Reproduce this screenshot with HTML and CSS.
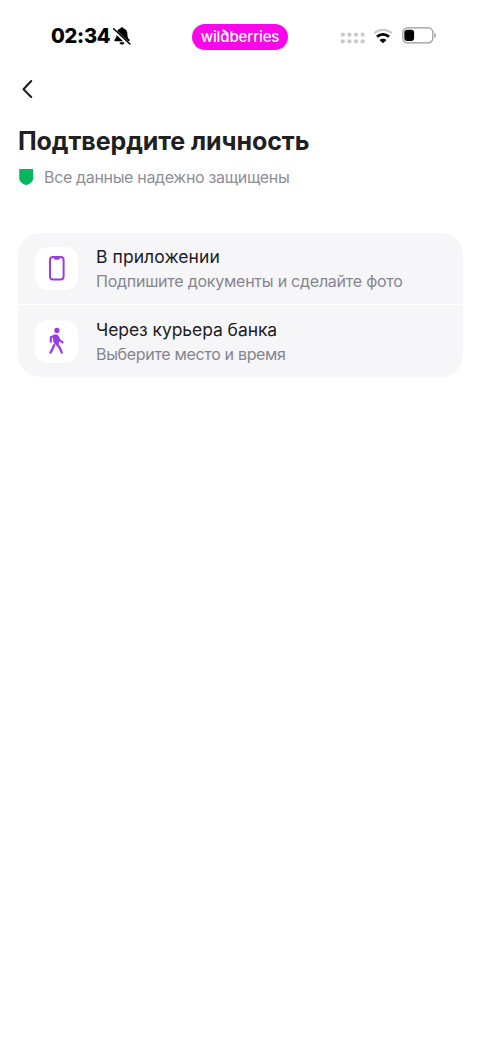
FILE: index.html
```html
<!DOCTYPE html>
<html lang="ru">
<head>
<meta charset="utf-8">
<meta name="viewport" content="width=device-width, initial-scale=1">
<title>Подтвердите личность</title>
<link rel="stylesheet" href="styles.css">
</head>
<body>
<header class="status">
  <div class="clock"><span class="time">02:34</span>
    <svg class="bell" width="20" height="20" viewBox="0 0 20 20"><path d="M10 1.2c-.9 0-1.500.6-1.600 1.400C5.800 3.200 4.600 5.400 4.600 8c0 3.200-.7 4.400-2 5.600-.6.6-.4 1.700.6 1.700h13.600c1 0 1.200-1.100.6-1.700-1.300-1.200-2-2.400-2-5.600 0-2.600-1.200-4.800-3.800-5.400C11.500 1.800 10.900 1.200 10 1.200zM7.500 16.300h5c-.2 1.500-1.200 2.300-2.500 2.300s-2.300-.8-2.500-2.300z" fill="#000"/><path d="M1 3.200 17.600 19" stroke="#fff" stroke-width="3.600"/><path d="M1.600 2.700 18 18" stroke="#000" stroke-width="1.500" stroke-linecap="round"/></svg>
  </div>
  <div class="brand"><span class="brand-text">wil<span class="brand-d">d</span>berries</span></div>
  <div class="system">
    <svg class="signal" width="26" height="13" viewBox="0 0 26 13" fill="#c9c9cb"><circle cx="2.800" cy="2.700" r="2.100"/><circle cx="9.400" cy="2.700" r="2.100"/><circle cx="16" cy="2.700" r="2.100"/><circle cx="22.600" cy="2.700" r="2.100"/><circle cx="2.800" cy="9.300" r="2.100"/><circle cx="9.400" cy="9.300" r="2.100"/><circle cx="16" cy="9.300" r="2.100"/><circle cx="22.600" cy="9.300" r="2.100"/></svg>
    <svg class="wifi" width="20" height="16" viewBox="0 0 20 16" fill="none" stroke-width="2.800"><path d="M1.200 5.300C6.200.7 13.800.7 18.800 5.300" stroke="#c9c9cb" stroke-width="2.200"/><path d="M4 8.700c3.400-3.100 8.600-3.100 12 0" stroke="#000"/><path d="M10 15.200 6.500 12c2-1.700 5-1.700 7 0z" fill="#000"/></svg>
    <svg class="battery" width="35" height="17" viewBox="0 0 35 17"><rect x=".8" y=".8" width="30" height="15" rx="4.600" fill="#fff" stroke="#98989b" stroke-width="1.200"/><rect x="2.300" y="2.700" width="9.800" height="11.200" rx="2.800" fill="#000"/><path d="M32.300 5.800c2.100.8 2.100 4.400 0 5.200z" fill="#98989b"/></svg>
  </div>
</header>
<nav class="nav">
  <svg width="14" height="20" viewBox="0 0 14 20"><path d="M11.200 2 3.500 10.300l7.700 7.700" fill="none" stroke="#1f1f22" stroke-width="2.100" stroke-linecap="round" stroke-linejoin="round"/></svg>
</nav>
<main class="content">
  <h1 class="title">Подтвердите личность</h1>
  <div class="secure">
    <svg width="16" height="18" viewBox="0 0 16 18"><path d="M1.900.9h12.500c.5 0 .8.300.8.800v8c0 3.700-2.400 5.800-7 7.500-4.500-1.700-7-3.800-7-7.500v-8c0-.5.2-.8.7-.8z" fill="#08b65c"/></svg>
    <span class="secure-text">Все данные надежно защищены</span>
  </div>
  <ul class="methods">
    <li class="method">
      <span class="tile"><svg width="18" height="26" viewBox="0 0 18 26"><rect x="2" y="2" width="13.600" height="22.400" rx="3" fill="none" stroke="#9b3be0" stroke-width="2"/><path d="M5.800 2h6v1.300c0 .9-.7 1.400-1.500 1.400h-3c-.8 0-1.500-.5-1.500-1.400z" fill="#9b3be0"/></svg></span>
      <div class="copy"><span class="name name-app">В приложении</span><span class="hint hint-app">Подпишите документы и сделайте фото</span></div>
    </li>
    <li class="method">
      <span class="tile"><svg width="18" height="28" viewBox="0 0 18 28" fill="none" stroke="#9b3be0" stroke-linecap="round" stroke-linejoin="round"><circle cx="8.900" cy="3.400" r="2.600" fill="#9b3be0" stroke="none"/><path d="M6.200 9h2.600l1.200 3.700-.7 4.300-2.600-2.400z" fill="#9b3be0" stroke-width="2.800"/><path d="M6.200 8.900 2.800 10.300v4.400" stroke-width="2.200"/><path d="m9.700 9.900 2 3.500 2.900 2" stroke-width="2.200"/><path d="m6 18.300-1.200 2.900-2.300 4.400" stroke-width="2.300"/><path d="m7.300 15.800 4.200 4.500 2.300 5.300" stroke-width="2.300"/></svg></span>
      <div class="copy"><span class="name name-courier">Через курьера банка</span><span class="hint hint-courier">Выберите место и время</span></div>
    </li>
  </ul>
</main>
</body>
</html>
```
FILE: styles.css
```css
* { box-sizing: border-box; }
body { margin: 0; background: #fff; color: #202023; font-family: Inter, "Liberation Sans", sans-serif; min-height: 1043px; }
svg { display: block; flex: none; }
.status { display: grid; grid-template-columns: 192px 96px 1fr; align-items: center; height: 74px; }
.clock { display: flex; align-items: center; padding: 0 0 2px 51px; color: #000; }
.time { width: 61px; font-size: 20px; line-height: 24px; font-weight: 800; letter-spacing: -.25px; white-space: nowrap; }
.brand { display: flex; align-items: center; justify-content: center; height: 26px; border-radius: 13px; background: #f808e9; color: #fff; }
.brand-text { font: 500 15px/20px Inter, sans-serif; letter-spacing: -.12px; margin-top: -1px; }
.brand-d { position: relative; }
/* the brand's d has its stem tilted to the left */
.brand-d::before { content: ""; position: absolute; right: 0; top: 2px; width: 4px; height: 5px; background: #f808e9; }
.brand-d::after { content: ""; position: absolute; left: 1.500px; top: 4.500px; width: 7px; height: 1.500px; border-radius: 1px; background: #fff; transform: rotate(38deg); }
.system { display: flex; align-items: center; padding-left: 52px; }
.signal { margin-top: 2px; }
.wifi { margin: -3px 0 0 7px; }
.battery { margin: -3px 0 0 9px; }
.nav { padding: 5px 20px 0; height: 50px; }
.content { padding: 0 18px; }
.title { margin: 0; font-size: 25px; line-height: 34px; font-weight: 700; letter-spacing: -.08px; white-space: nowrap; }
.secure { display: flex; align-items: center; gap: 10px; height: 38px; color: #8e8e98; font-size: 16px; letter-spacing: -.34px; white-space: nowrap; }
.methods { list-style: none; margin: 36.500px 0 0; padding: 0; width: 445px; border-radius: 22px; background: #f6f6f8; overflow: hidden; }
.method { display: flex; align-items: center; gap: 18px; height: 71.500px; padding-left: 17px; }
.method + .method { height: 73px; border-top: 1.500px solid #fff; }
.tile { display: flex; align-items: center; justify-content: center; width: 43px; height: 43px; border-radius: 13px; background: #fff; flex: none; }
.copy { display: flex; flex-direction: column; padding-top: 1px; white-space: nowrap; }
.name { font-size: 17.500px; line-height: 24px; }
.name-app { letter-spacing: .08px; }
.name-courier { letter-spacing: -.07px; }
.hint { font-size: 16px; line-height: 24px; color: #85858f; }
.hint-app { letter-spacing: -.24px; }
.hint-courier { letter-spacing: -.32px; }
```
